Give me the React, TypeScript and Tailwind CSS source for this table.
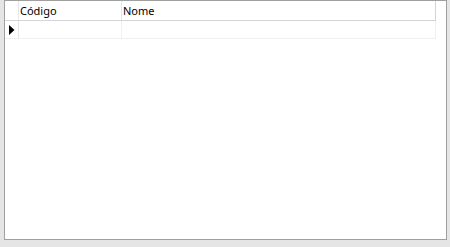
export default function App() {
  return (
    <div className="h-[247px] w-[450px] bg-[#e5e5e5] pl-[4px] font-['Noto_Sans',sans-serif] text-[11px] text-black">
      <div className="h-[240px] w-[443px] border border-[#a0a0a0] bg-white pr-[10px]">
        {/* header row */}
        <div className="flex h-[20px] border-b border-[#d5d5d5]">
          <div className="w-[14px] shrink-0 border-r border-[#e5e5e5]" />
          <div className="w-[103px] shrink-0 border-r border-[#e5e5e5] pl-[1px] leading-[20px]">Código</div>
          <div className="flex-1 border-r border-[#d5d5d5] pl-[1px] leading-[20px]">Nome</div>
        </div>
        {/* data row */}
        <div className="flex h-[18px] border-b border-[#f0f0f0]">
          <div className="flex w-[14px] shrink-0 items-center pl-[4px] border-r border-[#e5e5e5]">
            <svg width="6" height="10" viewBox="0 0 6 10">
              <path d="M0 0 L5.5 5 L0 10 Z" fill="#000" />
            </svg>
          </div>
          <div className="w-[103px] shrink-0 border-r border-[#f0f0f0]" />
          <div className="flex-1 border-r border-[#f0f0f0]" />
        </div>
      </div>
    </div>
  );
}
